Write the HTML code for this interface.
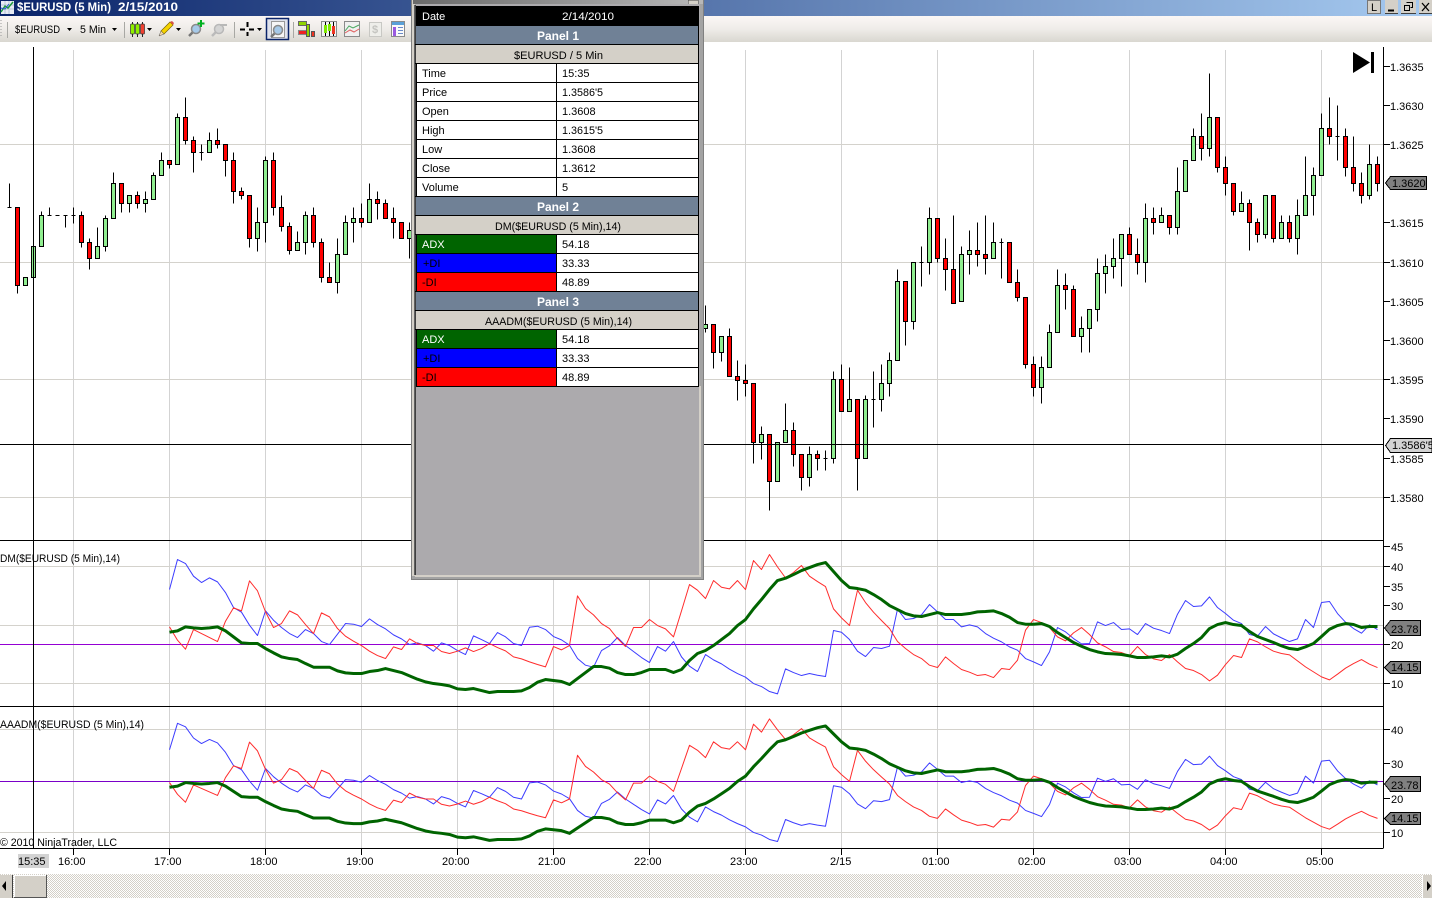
<!DOCTYPE html>
<html><head><meta charset="utf-8"><title>$EURUSD (5 Min) 2/15/2010</title>
<style>
html,body{margin:0;padding:0;background:#fff;width:1432px;height:898px;overflow:hidden}
svg{position:absolute;left:0;top:0;display:block}
text{font-family:"Liberation Sans",sans-serif;font-size:11px;fill:#000}
.b{font-weight:bold;fill:#fff;font-size:12px}
.w{fill:#fff}
.c{vector-effect:non-scaling-stroke;fill:none;stroke-linejoin:round}
</style></head><body>
<svg width="1432" height="898" viewBox="0 0 1432 898" xmlns="http://www.w3.org/2000/svg">
<defs>
<linearGradient id="tg"><stop offset="0" stop-color="#0a246a"/><stop offset="1" stop-color="#a6caf0"/></linearGradient>
<linearGradient id="tb" x1="0" y1="0" x2="0" y2="1"><stop offset="0" stop-color="#fbf7f5"/><stop offset=".5" stop-color="#efece9"/><stop offset="1" stop-color="#d9d7d0"/></linearGradient>
<linearGradient id="bt"><stop offset="0" stop-color="#6a6a6a"/><stop offset="1" stop-color="#b8b8b8"/></linearGradient>
<pattern id="dither" width="2" height="2" patternUnits="userSpaceOnUse"><rect width="2" height="2" fill="#fff"/><rect width="1" height="1" fill="#d4d0c8"/><rect x="1" y="1" width="1" height="1" fill="#d4d0c8"/></pattern>
<g id="ind">
<polyline class="c" stroke="#3c3cff" stroke-width="1" points="169,148 177,58 185,70 193,108 201,127 209,113 217,125 225,157 233,202 241,216 249,255 257,286 265,212 273,240 281,262 289,280 297,292 305,268 313,280 321,304 329,313 337,282 345,250 353,252 361,259 369,236 377,253 385,266 393,284 401,296 409,313 417,308 425,316 433,333 441,308 449,316 457,331 465,343 473,287 481,298 489,310 497,277 505,290 513,310 521,316 529,261 537,258 545,268 553,289 561,299 569,315 577,355 585,375 593,381 601,331 609,317 617,292 625,316 633,334 641,352 649,367 657,319 665,333 673,304 681,350 689,378 697,394 705,343 713,359 721,371 729,387 737,400 745,411 753,430 761,439 769,454 777,461 785,386 793,397 801,406 809,400 817,405 825,409 833,271 841,276 849,298 857,333 865,349 873,322 881,325 889,318 897,207 905,238 913,235 921,224 929,193 937,215 945,238 953,238 961,260 969,254 977,260 985,280 993,294 1001,305 1009,320 1017,330 1025,355 1033,365 1041,376 1049,335 1057,262 1065,275 1073,295 1081,311 1089,310 1097,245 1105,256 1113,247 1121,268 1129,266 1137,283 1145,250 1153,264 1161,271 1169,280 1177,222 1185,181 1193,199 1201,197 1209,170 1217,202 1225,220 1233,240 1241,250 1249,283 1257,288 1265,259 1273,281 1281,293 1289,304 1297,296 1305,238 1313,262 1321,187 1329,184 1337,220 1345,246 1353,265 1361,279 1369,254 1377,268"/>
<polyline class="c" stroke="#ff2c2c" stroke-width="1" points="169,260 177,300 185,327 193,268 201,280 209,292 217,304 225,243 233,203 241,212 249,122 257,152 265,215 273,262 281,250 289,212 297,224 305,253 313,280 321,218 329,230 337,265 345,288 353,303 361,316 369,333 377,346 385,355 393,320 401,328 409,296 417,310 425,316 433,316 441,334 449,340 457,333 465,323 473,334 481,325 489,310 497,322 505,332 513,350 521,356 529,365 537,373 545,380 553,319 561,329 569,316 577,167 585,205 593,224 601,250 609,265 617,295 625,319 633,262 641,262 649,238 657,256 665,266 673,290 681,212 689,133 697,150 705,175 713,121 721,141 729,146 737,121 745,148 753,61 761,88 769,43 777,80 785,113 793,97 801,76 809,108 817,124 825,139 833,206 841,233 849,256 857,150 865,187 873,216 881,241 889,265 897,304 905,325 913,343 921,355 929,375 937,382 945,350 953,370 961,388 969,396 977,406 985,403 993,412 1001,385 1009,388 1017,360 1025,270 1033,238 1041,247 1049,262 1057,290 1065,302 1073,278 1081,262 1089,283 1097,308 1105,320 1113,334 1121,337 1129,346 1137,319 1145,343 1153,356 1161,361 1169,343 1177,365 1185,385 1193,391 1201,403 1209,422 1217,405 1225,373 1233,346 1241,352 1249,296 1257,305 1265,320 1273,333 1281,340 1289,344 1297,362 1305,380 1313,395 1321,410 1329,419 1337,402 1345,384 1353,370 1361,358 1369,372 1377,382"/>
<polyline class="c" stroke="#006400" stroke-width="3" points="169,276 177,272 185,260 193,263 201,265 209,263 217,260 225,272 233,290 241,308 249,310 257,310 265,325 273,338 281,350 289,355 297,358 305,370 313,381 321,381 329,381 337,392 345,398 353,400 361,400 369,394 377,391 385,385 393,391 401,397 409,407 417,417 425,425 433,430 441,433 449,437 457,446 465,448 473,445 481,451 489,457 497,454 505,454 513,454 521,452 529,442 537,426 545,418 553,421 561,424 569,433 577,415 585,397 593,379 601,379 609,384 617,397 625,403 633,403 641,397 649,388 657,388 665,388 673,397 681,388 689,361 697,340 705,331 713,316 721,298 729,280 737,256 745,238 753,206 761,178 769,148 777,121 785,114 793,103 801,91 809,82 817,73 825,67 833,94 841,121 849,142 857,145 865,150 873,163 881,178 889,196 897,208 905,220 913,227 921,229 929,223 937,217 945,223 953,223 961,223 969,220 977,215 985,214 993,212 1001,220 1009,231 1017,247 1025,252 1033,252 1041,250 1049,259 1057,277 1065,292 1073,307 1081,318 1089,328 1097,335 1105,340 1113,341 1121,343 1129,347 1137,352 1145,352 1153,350 1161,347 1169,350 1177,342 1185,325 1193,310 1201,292 1209,265 1217,253 1225,247 1233,253 1241,256 1249,274 1257,289 1265,298 1273,307 1281,317 1289,325 1297,328 1305,320 1313,310 1321,289 1329,267 1337,256 1345,250 1353,253 1361,262 1369,259 1377,259"/>
</g>
</defs>

<!-- grid -->
<g stroke="#d3d3d3" stroke-width="1" shape-rendering="crispEdges">
<path d="M73.5 50V848M169.5 50V848M265.5 50V848M361.5 50V848M457.5 50V848M553.5 50V848M649.5 50V848M745.5 50V848M841.5 50V848M937.5 50V848M1033.5 50V848M1129.5 50V848M1225.5 50V848M1321.5 50V848"/>
<path stroke="#d4d2cc" d="M0 144.5H1383M0 262.5H1383M0 379.5H1383M0 497.5H1383M0 566.5H1383M0 625.5H1383M0 683.5H1383M0 729.5H1383M0 832.5H1383"/>
</g>
<g stroke="#9400d3" shape-rendering="crispEdges"><path d="M0 644.5H1383"/><path stroke="#7a00c8" d="M0 781.5H1383"/></g>

<!-- candles -->
<g transform="translate(.5,.5)" shape-rendering="crispEdges">
<path fill="none" stroke="#000" d="M9 183V207M7 207h4M17 207V293M41 211V246M49 207V215M47 215h4M55 215h4M63 215h4M65 215V227M71 215h4M73 207V223M81 211V247M89 238V269M97 227V258M105 215V251M113 172V218M121 183V212M129 195V212M137 191V208M145 191V212M153 172V199M161 152V175M169 160V168M177 113V164M185 97V144M193 136V172M201 144V160M199 152h4M209 132V152M217 128V148M225 144V176M233 152V203M241 187V199M249 195V247M257 207V251M265 156V242M273 152V215M281 195V231M289 222V254M297 231V250M305 211V254M313 207V247M321 238V282M329 262V282M337 238V293M345 215V254M353 207V242M361 203V227M369 183V222M377 191V219M385 199V218M393 207V238M401 222V238M409 222V258M705 305V332M713 324V368M721 336V361M729 328V376M737 360V400M745 364V396M753 383V463M761 426V459M769 434V510M785 403V442M793 422V466M801 454V490M809 446V486M817 450V470M825 450V470M823 458h4M833 371V463M841 364V411M849 367V411M857 399V490M865 395V458M873 371V427M871 399h4M881 364V411M889 352V396M897 269V360M905 281V345M913 262V329M921 246V286M919 262h4M929 207V274M937 218V262M945 238V290M953 215V303M961 246V301M969 230V274M977 222V266M985 215V274M993 222V258M1001 238V278M999 242h4M1009 242V282M1017 269V301M1025 297V368M1033 356V396M1041 356V403M1049 324V367M1057 269V332M1065 273V309M1073 285V336M1081 316V352M1089 309V352M1097 258V321M1105 254V293M1113 238V278M1121 234V286M1129 227V254M1137 238V274M1145 203V282M1153 207V234M1161 207V222M1169 215V234M1177 167V234M1185 160V191M1193 128V160M1201 113V160M1209 73V156M1217 117V172M1225 156V195M1233 183V215M1241 191V211M1249 199V250M1257 218V242M1265 195V238M1273 195V242M1281 215V238M1289 215V242M1297 199V254M1305 156V215M1313 167V215M1321 113V175M1329 97V144M1335 136h4M1337 105V160M1345 128V176M1353 136V191M1361 172V203M1369 144V199M1377 156V191"/>
<path fill="#90ee90" stroke="#000" d="M23 277h4V285h-4zM31 246h4V277h-4zM39 215h4V246h-4zM95 246h4V258h-4zM103 218h4V246h-4zM111 183h4V218h-4zM127 195h4V203h-4zM143 199h4V203h-4zM151 175h4V199h-4zM159 160h4V175h-4zM175 117h4V164h-4zM207 140h4V152h-4zM255 222h4V238h-4zM263 160h4V222h-4zM295 242h4V250h-4zM303 215h4V242h-4zM335 254h4V282h-4zM343 222h4V254h-4zM351 218h4V222h-4zM367 199h4V222h-4zM407 230h4V238h-4zM703 324h4V328h-4zM719 336h4V352h-4zM759 434h4V442h-4zM775 442h4V481h-4zM783 430h4V442h-4zM807 454h4V477h-4zM831 379h4V458h-4zM847 399h4V411h-4zM863 399h4V458h-4zM879 383h4V399h-4zM887 360h4V383h-4zM895 281h4V360h-4zM911 262h4V321h-4zM927 218h4V262h-4zM959 254h4V301h-4zM967 250h4V254h-4zM991 242h4V258h-4zM1039 367h4V387h-4zM1047 332h4V367h-4zM1055 285h4V332h-4zM1079 328h4V336h-4zM1087 309h4V328h-4zM1095 273h4V309h-4zM1103 266h4V273h-4zM1111 258h4V266h-4zM1119 234h4V258h-4zM1143 218h4V262h-4zM1159 215h4V222h-4zM1175 191h4V227h-4zM1183 160h4V191h-4zM1191 136h4V160h-4zM1207 117h4V148h-4zM1239 203h4V211h-4zM1263 195h4V234h-4zM1279 222h4V238h-4zM1295 215h4V238h-4zM1303 195h4V215h-4zM1311 175h4V195h-4zM1319 128h4V175h-4zM1367 164h4V195h-4z"/>
<path fill="#f00" stroke="#000" d="M15 207h4V285h-4zM79 215h4V242h-4zM87 242h4V258h-4zM119 183h4V203h-4zM135 195h4V203h-4zM167 160h4V164h-4zM183 117h4V140h-4zM191 140h4V152h-4zM215 140h4V144h-4zM223 144h4V160h-4zM231 160h4V191h-4zM239 191h4V195h-4zM247 195h4V238h-4zM271 160h4V207h-4zM279 207h4V226h-4zM287 226h4V250h-4zM311 215h4V242h-4zM319 242h4V277h-4zM327 277h4V282h-4zM359 218h4V222h-4zM375 199h4V203h-4zM383 203h4V218h-4zM391 218h4V222h-4zM399 222h4V238h-4zM711 324h4V352h-4zM727 336h4V376h-4zM735 376h4V380h-4zM743 380h4V383h-4zM751 383h4V442h-4zM767 434h4V481h-4zM791 430h4V454h-4zM799 454h4V477h-4zM815 454h4V458h-4zM839 379h4V411h-4zM855 399h4V458h-4zM903 281h4V321h-4zM935 218h4V258h-4zM943 258h4V269h-4zM951 269h4V303h-4zM975 250h4V254h-4zM983 254h4V258h-4zM1007 242h4V282h-4zM1015 282h4V297h-4zM1023 297h4V364h-4zM1031 364h4V387h-4zM1063 285h4V289h-4zM1071 289h4V336h-4zM1127 234h4V254h-4zM1135 254h4V262h-4zM1151 218h4V222h-4zM1167 215h4V227h-4zM1199 136h4V148h-4zM1215 117h4V167h-4zM1223 167h4V183h-4zM1231 183h4V211h-4zM1247 203h4V222h-4zM1255 222h4V234h-4zM1271 195h4V238h-4zM1287 222h4V238h-4zM1327 128h4V136h-4zM1343 136h4V167h-4zM1351 167h4V183h-4zM1359 183h4V195h-4zM1375 164h4V183h-4z"/>
</g>

<!-- indicator lines -->
<use href="#ind" transform="translate(.5,540.2) scale(1,.33333)"/>
<use href="#ind" transform="translate(.5,706.3) scale(1,.29333)"/>

<!-- chart labels -->
<text x="0" y="562" textLength="120" lengthAdjust="spacingAndGlyphs">DM($EURUSD (5 Min),14)</text>
<text x="0" y="728" textLength="144" lengthAdjust="spacingAndGlyphs">AAADM($EURUSD (5 Min),14)</text>
<text x="0" y="846" textLength="117" lengthAdjust="spacingAndGlyphs">© 2010 NinjaTrader, LLC</text>

<!-- frame lines -->
<g stroke="#000" shape-rendering="crispEdges" fill="none">
<path d="M0 540.5H1383M0 706.5H1383M0 848.5H1383M1383.5 47V848.5M33.5 47V848M0 444.5H1383"/>
<path d="M73.5 848V855M169.5 848V855M265.5 848V855M361.5 848V855M457.5 848V855M553.5 848V855M649.5 848V855M745.5 848V855M841.5 848V855M937.5 848V855M1033.5 848V855M1129.5 848V855M1225.5 848V855M1321.5 848V855"/>
<path d="M1384 66.5h6M1384 105.5h6M1384 144.5h6M1384 222.5h6M1384 262.5h6M1384 301.5h6M1384 340.5h6M1384 379.5h6M1384 418.5h6M1384 458.5h6M1384 497.5h6M1384 546.5h6M1384 566.5h6M1384 586.5h6M1384 605.5h6M1384 644.5h6M1384 683.5h6M1384 729.5h6M1384 763.5h6M1384 798.5h6M1384 832.5h6"/>
</g>

<!-- axis labels -->
<g>
<text x="1390" y="71">1.3635</text><text x="1390" y="110">1.3630</text><text x="1390" y="149">1.3625</text><text x="1390" y="227">1.3615</text><text x="1390" y="267">1.3610</text><text x="1390" y="306">1.3605</text><text x="1390" y="345">1.3600</text><text x="1390" y="384">1.3595</text><text x="1390" y="423">1.3590</text><text x="1390" y="463">1.3585</text><text x="1390" y="502">1.3580</text>
<text x="1391" y="551">45</text><text x="1391" y="571">40</text><text x="1391" y="591">35</text><text x="1391" y="610">30</text><text x="1391" y="649">20</text><text x="1391" y="688">10</text>
<text x="1391" y="734">40</text><text x="1391" y="768">30</text><text x="1391" y="803">20</text><text x="1391" y="837">10</text>
</g>

<!-- flags -->
<g stroke="#000" stroke-width="1" shape-rendering="crispEdges">
<path fill="#808080" d="M1390.5 176.5H1426.5V189.5H1390.5L1385.5 183z"/>
<path fill="#d3d3d3" d="M1390.5 438.5H1432V452.5H1390.5L1385.5 445.5z"/>
<path fill="#808080" d="M1390.5 620.5H1420.5V635.5H1390.5L1384.5 628z"/>
<path fill="#808080" d="M1390.5 661.5H1420.5V673.5H1390.5L1384.5 667.5z"/>
<path fill="#808080" d="M1390.5 776.5H1420.5V791.5H1390.5L1384.5 784z"/>
<path fill="#808080" d="M1390.5 812.5H1420.5V824.5H1390.5L1384.5 818.5z"/>
</g>
<text x="1392" y="187">1.3620</text><text x="1392" y="449">1.3586'5</text>
<text x="1391" y="633">23.78</text><text x="1391" y="671">14.15</text><text x="1391" y="789">23.78</text><text x="1391" y="822">14.15</text>

<!-- end-of-chart icon -->
<path d="M1353 52L1370 62.5L1353 73z" fill="#000"/><rect x="1371" y="52" width="3" height="21"/>

<!-- time axis -->
<rect x="18" y="854" width="31" height="14" fill="#d3d3d3"/>
<text x="18" y="865">15:35</text><text x="58" y="865">16:00</text><text x="154" y="865">17:00</text><text x="250" y="865">18:00</text><text x="346" y="865">19:00</text><text x="442" y="865">20:00</text><text x="538" y="865">21:00</text><text x="634" y="865">22:00</text><text x="730" y="865">23:00</text><text x="830" y="865">2/15</text><text x="922" y="865">01:00</text><text x="1018" y="865">02:00</text><text x="1114" y="865">03:00</text><text x="1210" y="865">04:00</text><text x="1306" y="865">05:00</text>

<!-- scrollbar -->
<rect x="0" y="874" width="1432" height="24" fill="url(#dither)"/>
<rect x="0" y="875" width="12" height="23" fill="#d4d0c8"/><path d="M12.5 875V898" stroke="#404040"/>
<path d="M6 881V891L2 886z" fill="#000"/>
<rect x="14" y="875" width="32" height="22" fill="#d4d0c8"/><path d="M14 875.5H46M14.5 875V897" stroke="#fff"/><path d="M46.5 875V898M14 897.5H47" stroke="#555"/>
<rect x="1422" y="875" width="10" height="23" fill="#d4d0c8"/><path d="M1422.5 875V898" stroke="#fff"/>
<path d="M1427 881V891L1431 886z" fill="#000"/>

<!-- title bar -->
<rect width="1432" height="16" fill="url(#tg)"/>
<rect x="1" y="1" width="13" height="13" fill="#e8ecf4"/>
<path d="M1 5h13M1 9h13M5 1v13M9 1v13" stroke="#b9c4d9"/>
<path d="M1 12L5 6L8 8L13 2" fill="none" stroke="#1c9a3a" stroke-width="1.5"/><path d="M1 8L5 9L9 4" fill="none" stroke="#2a56c8"/>
<text x="17" y="11" class="b" textLength="94" lengthAdjust="spacingAndGlyphs">$EURUSD (5 Min)</text>
<text x="118" y="11" class="b" textLength="60" lengthAdjust="spacingAndGlyphs">2/15/2010</text>
<g shape-rendering="crispEdges">
<rect x="1367.5" y="0.5" width="13" height="13" fill="#d4d0c8" stroke="#777"/>
<rect x="1385" y="0" width="13" height="14" fill="#d4d0c8"/><rect x="1401" y="0" width="15" height="14" fill="#d4d0c8"/><rect x="1419" y="0" width="13" height="14" fill="#d4d0c8"/>
<path d="M1385 13.5h13M1401 13.5h15M1419 13.5h13" stroke="#404040"/>
<path d="M1388 10.5h6" stroke="#000" stroke-width="2"/>
<path d="M1406.5 2.5h6v5h-2M1404.5 5.5h5v5h-5z" fill="none" stroke="#000"/>
<path d="M1422 3L1429 11M1429 3L1422 11" stroke="#000" stroke-width="1.3" shape-rendering="auto"/>
</g>
<text x="1371" y="11" font-size="11">L</text>

<!-- toolbar -->
<rect y="16" width="1432" height="26" fill="url(#tb)"/>
<path d="M1 20v18" stroke="#999" stroke-dasharray="1 2"/>
<path d="M7.5 22V38M124.5 22V38M234.5 22V38M293.5 22V38" stroke="#a8a8a4"/>
<text x="15" y="33" textLength="45" lengthAdjust="spacingAndGlyphs">$EURUSD</text>
<text x="80" y="33" textLength="26" lengthAdjust="spacingAndGlyphs">5 Min</text>
<path d="M67 28h5l-2.500 3zM112 28h5l-2.500 3zM147 28h5l-2.500 3zM176 28h5l-2.500 3zM257 28h5l-2.500 3z"/>
<!-- candle icon -->
<path d="M132.500 22V37M137.500 22V37M142.500 22V37" stroke="#222" shape-rendering="crispEdges"/>
<rect x="130.500" y="24" width="4" height="10" rx="1" fill="#8ff000" stroke="#333" stroke-width=".7"/><rect x="135.500" y="24" width="4" height="10" rx="1" fill="#8ff000" stroke="#333" stroke-width=".7"/><rect x="140.500" y="24" width="4" height="10" rx="1" fill="#f04030" stroke="#333" stroke-width=".7"/>
<!-- pencil -->
<path d="M161 31L170 22L173 25L164 34z" fill="#f5d300" stroke="#7a6200" stroke-width=".7"/><path d="M170 22L173 25L174 23L172 21z" fill="#d8504a"/><path d="M161 31L159 36L164 34z" fill="#f4d9a8" stroke="#555" stroke-width=".5"/>
<!-- zoom + -->
<path d="M189 36L193 32" stroke="#777" stroke-width="2.500"/><circle cx="196" cy="29" r="4.500" fill="#a6c9e8" stroke="#8a8a8a" stroke-width="1.500"/>
<path d="M201 20V27M197.500 23.500H204.500" stroke="#00b020" stroke-width="2"/>
<!-- zoom - -->
<path d="M212 36L216 32" stroke="#bbb" stroke-width="2.500"/><circle cx="219" cy="29" r="4.500" fill="#d4d4d4" stroke="#b8b8b8" stroke-width="1.500"/>
<path d="M220 25H227" stroke="#b8b8b8" stroke-width="2"/>
<!-- crosshair -->
<path d="M240 29.500H245M249 29.500H254M247.500 22V27M247.500 32V36" stroke="#000" stroke-width="2"/>
<!-- selected -->
<rect x="266.500" y="18.500" width="22" height="21" fill="#dfe2ec" stroke="#0a246a" stroke-width="1.500"/>
<rect x="271.500" y="21.500" width="13" height="16" fill="#f6f6f6" stroke="#9a9a9a"/>
<path d="M271 37L275 33" stroke="#777" stroke-width="2.500"/><circle cx="278" cy="30" r="4.500" fill="#a6c9e8" stroke="#8a8a8a" stroke-width="1.500"/>
<!-- strategy icon -->
<g shape-rendering="crispEdges">
<rect x="298.500" y="21.500" width="8" height="4" fill="#8fd400" stroke="#666"/>
<rect x="298.500" y="30.500" width="8" height="4" fill="#ee2222" stroke="#888"/>
<rect x="306.500" y="24.500" width="3" height="12" fill="#8fd400" stroke="#555"/>
<rect x="311.500" y="31.500" width="3" height="5" fill="#ee3322" stroke="#555"/>
<!-- icon 2 -->
<rect x="321.500" y="21.500" width="15" height="15" fill="#f2f2f2" stroke="#8a8a8a"/>
<path d="M325.500 22V36M329.500 22V36M333.500 22V36" stroke="#000"/>
<rect x="324" y="25" width="3" height="8" fill="#7ee800"/><rect x="328" y="24" width="3" height="7" fill="#7ee800"/><rect x="332" y="26" width="3" height="8" fill="#ee3322"/>
<!-- icon 3 -->
<rect x="344.500" y="21.500" width="15" height="15" fill="#f0f0f0" stroke="#8a8a8a"/>
<path d="M345 31L349 26L353 28L359 25" fill="none" stroke="#4aa860" shape-rendering="auto"/><path d="M345 33L350 30L354 32L359 29" fill="none" stroke="#e06060" shape-rendering="auto"/>
<!-- icon 4 -->
<rect x="369.500" y="22.500" width="12" height="14" fill="#eeeeea" stroke="#c8c8c4"/>
<!-- icon 5 -->
<rect x="391.500" y="21.500" width="13" height="15" fill="#fafafa" stroke="#8a8a8a"/>
<rect x="392" y="22" width="12" height="3" fill="#5aa0d8"/><rect x="393" y="27" width="3" height="9" fill="#9a5ae0"/>
<path d="M398 27.500h5M398 30.500h5M398 33.500h5" stroke="#6a8ac8"/>
</g>
<text x="372" y="33" font-size="10" font-weight="bold" style="fill:#c4c4c0">$</text>

<!-- DATA BOX -->
<g shape-rendering="crispEdges">
<rect x="411" y="0" width="293" height="580" fill="#808080"/>
<rect x="412" y="0" width="291" height="579" fill="#a3a3a3"/>
<rect x="412" y="0" width="3" height="576" fill="#d4d0c8"/>
<rect x="413" y="0" width="290" height="4" fill="url(#bt)"/>
<rect x="688" y="0" width="10" height="4" fill="#d4d0c8" stroke="#444" stroke-width=".5"/>
<rect x="415" y="4" width="285" height="572" fill="#acaaad"/>
<rect x="699" y="386" width="2" height="190" fill="#d4d0c8"/><rect x="415" y="575" width="286" height="2" fill="#d4d0c8"/>
<rect x="415" y="5" width="1" height="570" fill="#404040"/><rect x="414" y="5" width="1" height="570" fill="#606060"/>
<rect x="416" y="6" width="283" height="20" fill="#000"/>
<rect x="416" y="26" width="283" height="19" fill="#708196"/>
<rect x="416" y="45" width="283" height="18" fill="#d4d0c8"/>
<rect x="416" y="63" width="283" height="133" fill="#fff"/>
<rect x="416" y="196" width="283" height="19" fill="#708196"/>
<rect x="416" y="215" width="283" height="19" fill="#d4d0c8"/>
<rect x="416" y="234" width="283" height="57" fill="#fff"/>
<rect x="416" y="234" width="140" height="19" fill="#006400"/><rect x="416" y="253" width="140" height="19" fill="#00f"/><rect x="416" y="272" width="140" height="19" fill="#f00"/>
<rect x="416" y="291" width="283" height="19" fill="#708196"/>
<rect x="416" y="310" width="283" height="19" fill="#d4d0c8"/>
<rect x="416" y="329" width="283" height="57" fill="#fff"/>
<rect x="416" y="329" width="140" height="19" fill="#006400"/><rect x="416" y="348" width="140" height="19" fill="#00f"/><rect x="416" y="367" width="140" height="19" fill="#f00"/>
<path fill="none" stroke="#000" d="M415 44.500H699M415 63.500H699M416 82.500H699M416 101.500H699M416 120.500H699M416 139.500H699M416 158.500H699M416 177.500H699M415 196.500H699M415 215.500H699M415 234.500H699M416 253.500H699M416 272.500H699M415 291.500H699M415 310.500H699M415 329.500H699M416 348.500H699M416 367.500H699M416 386.500H699M416.500 63V196M416.500 234V291M416.500 329V386M556.500 63V196M556.500 234V291M556.500 329V386M698.500 6V386"/>
</g>
<text class="w" x="422" y="20">Date</text><text class="w" x="562" y="20" textLength="52" lengthAdjust="spacingAndGlyphs">2/14/2010</text>
<text class="b" x="537" y="40">Panel 1</text>
<text x="514" y="59" textLength="89" lengthAdjust="spacingAndGlyphs">$EURUSD / 5 Min</text>
<text x="422" y="77">Time</text><text x="562" y="77">15:35</text>
<text x="422" y="96">Price</text><text x="562" y="96" textLength="41" lengthAdjust="spacingAndGlyphs">1.3586'5</text>
<text x="422" y="115">Open</text><text x="562" y="115">1.3608</text>
<text x="422" y="134">High</text><text x="562" y="134" textLength="41" lengthAdjust="spacingAndGlyphs">1.3615'5</text>
<text x="422" y="153">Low</text><text x="562" y="153">1.3608</text>
<text x="422" y="172">Close</text><text x="562" y="172">1.3612</text>
<text x="422" y="191">Volume</text><text x="562" y="191">5</text>
<text class="b" x="537" y="211">Panel 2</text>
<text x="495" y="230" textLength="126" lengthAdjust="spacingAndGlyphs">DM($EURUSD (5 Min),14)</text>
<text class="w" x="422" y="248">ADX</text><text x="562" y="248">54.18</text>
<text x="423" y="267">+DI</text><text x="562" y="267">33.33</text>
<text x="422" y="286">-DI</text><text x="562" y="286">48.89</text>
<text class="b" x="537" y="306">Panel 3</text>
<text x="485" y="325" textLength="147" lengthAdjust="spacingAndGlyphs">AAADM($EURUSD (5 Min),14)</text>
<text class="w" x="422" y="343">ADX</text><text x="562" y="343">54.18</text>
<text x="423" y="362">+DI</text><text x="562" y="362">33.33</text>
<text x="422" y="381">-DI</text><text x="562" y="381">48.89</text>
</svg>
</body></html>
